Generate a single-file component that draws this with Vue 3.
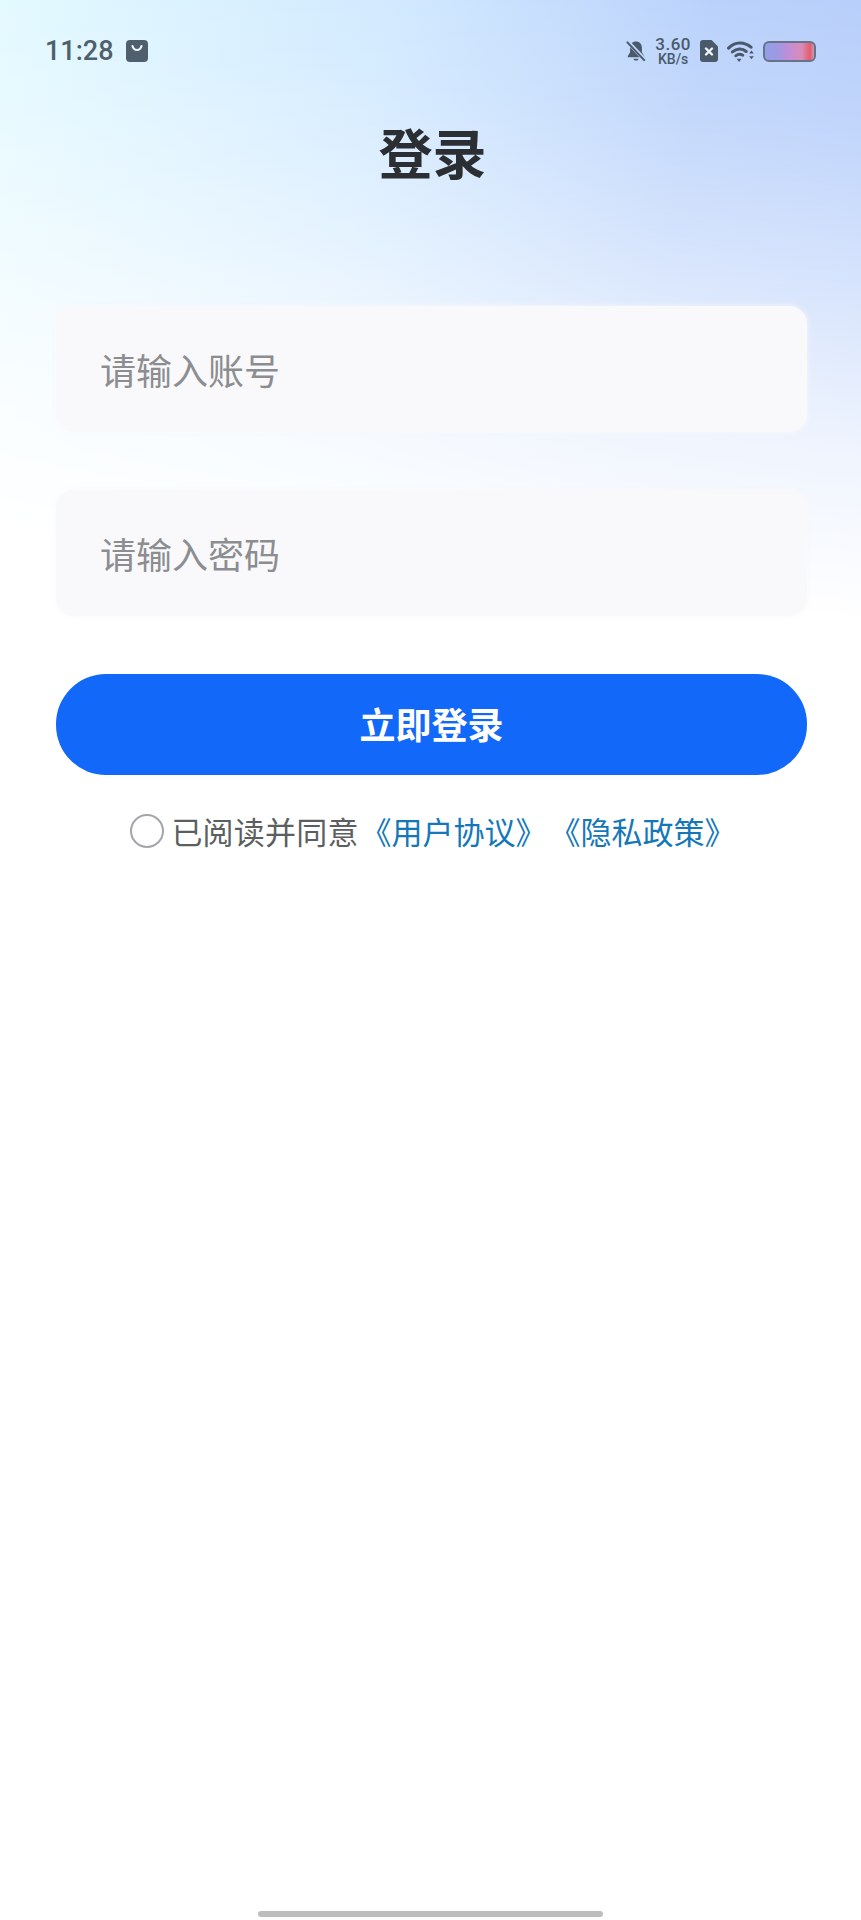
<script setup>
import { ref } from 'vue';

const account = ref('');
const password = ref('');
const agreed = ref(false);
</script>

<template>
  <div class="page">
    <div class="status-bar">
      <div class="status-left">
        <span class="time">11:28</span>
        <svg class="bag" width="22" height="22" viewBox="0 0 22 22">
          <rect width="22" height="22" rx="4" fill="#4f5f6c" />
          <path d="M6.500 6c.8 3 2.400 4 4.500 4s3.700-1 4.500-4" fill="none" stroke="#eef6ff" stroke-width="2.200" stroke-linecap="round" />
        </svg>
      </div>
      <div class="status-right">
        <svg width="20" height="22" viewBox="0 0 22 24">
          <path d="M11 1.500c-4 0-6.500 3-6.500 7v5L2 17.500v1.500h18v-1.500l-2.500-4v-5c0-4-2.500-7-6.500-7z" fill="#4a5a6b" />
          <path d="M8 20.500c.5 1.500 1.500 2 3 2s2.500-.5 3-2z" fill="#4a5a6b" />
          <path d="M2 2l19 20" stroke="#bdd3fb" stroke-width="4.500" />
          <path d="M1.500 2.500l18.500 19.500" stroke="#4a5a6b" stroke-width="2.200" stroke-linecap="round" />
        </svg>
        <div class="speed">
          <span class="speed-num">3.60</span>
          <span class="speed-unit">KB/s</span>
        </div>
        <svg width="18" height="22" viewBox="0 0 18 22">
          <path d="M3 0h8.500L18 6.500V19a3 3 0 0 1-3 3H3a3 3 0 0 1-3-3V3a3 3 0 0 1 3-3z" fill="#4a5a6b" />
          <path d="M6 8.500l6 6M12 8.500l-6 6" stroke="#f2f6ff" stroke-width="2.400" stroke-linecap="round" />
        </svg>
        <svg width="27" height="21" viewBox="0 0 28 22">
          <path d="M1.500 7.500C8 .5 18 .5 25 6.500" fill="none" stroke="#4a5a6b" stroke-width="3.200" stroke-linecap="round" />
          <path d="M5.500 11.500c4.500-4 10.500-4 14.500-.5" fill="none" stroke="#4a5a6b" stroke-width="3.200" stroke-linecap="round" />
          <path d="M9 15.500c2.500-2 5-2 7.500-.5" fill="none" stroke="#4a5a6b" stroke-width="3" stroke-linecap="round" />
          <path d="M10 18.500h5L12.500 22z" fill="#4a5a6b" />
          <path d="M23 13l2.500-3 2.500 3zM23 16l2.500 3 2.500-3z" fill="#4a5a6b" />
        </svg>
        <div class="battery"></div>
      </div>
    </div>

    <h1 class="title">登录</h1>

    <form class="login-form" @submit.prevent>
      <input v-model="account" class="field" type="text" placeholder="请输入账号" />
      <input v-model="password" class="field" type="password" placeholder="请输入密码" />
      <button class="submit" type="submit">立即登录</button>
    </form>

    <div class="agreement">
      <span class="radio" :class="{ checked: agreed }" @click="agreed = !agreed"></span>
      <span class="agree-text">已阅读并同意</span>
      <a class="agree-link first">《用户协议》</a>
      <a class="agree-link second">《隐私政策》</a>
    </div>

    <div class="home-bar"></div>
  </div>
</template>

<style>
html, body {
  margin: 0;
  background: #fff;
}
</style>

<style scoped>
.page {
  width: 861px;
  height: 1920px;
  display: flex;
  flex-direction: column;
  box-sizing: border-box;
  font-family: "Noto Sans CJK SC", "Noto Sans", sans-serif;
  background:
    linear-gradient(186deg, rgba(255, 255, 255, 0) 0, rgba(255, 255, 255, 0.15) 130px, rgba(255, 255, 255, 0.47) 295px, rgba(255, 255, 255, 0.77) 440px, #fff 620px),
    linear-gradient(100deg, #e0f9ff 0, #cfe8ff 40%, #b9d1fb 72%, #b6cdfb 100%);
  background-size: 100% 720px;
  background-repeat: no-repeat;
}

.status-bar {
  display: flex;
  justify-content: space-between;
  align-items: center;
  height: 50px;
  margin-top: 26px;
  padding: 0 45px;
}

.status-left {
  display: flex;
  align-items: center;
  gap: 12px;
}

.time {
  font-family: Roboto, sans-serif;
  font-size: 27px;
  font-weight: 500;
  color: #4f5f6c;
}

.status-right {
  display: flex;
  align-items: center;
  gap: 9px;
}

.speed {
  display: flex;
  flex-direction: column;
  align-items: center;
  font-family: Roboto, sans-serif;
  font-weight: 500;
  color: #4a5a6b;
}

.speed-num {
  font-size: 17px;
  line-height: 17px;
  letter-spacing: 0.5px;
}

.speed-unit {
  font-size: 14px;
  line-height: 13px;
}

.battery {
  width: 53px;
  height: 21px;
  box-sizing: border-box;
  border: 2.500px solid #66748a;
  border-radius: 6px;
  background: linear-gradient(90deg, #8fa0e8 0, #a595e2 30%, #c98cd0 55%, #d88cb8 75%, #e55a6c 92%, #c89cb0 100%);
}

.title {
  margin: 46px 0 0;
  padding-left: 4px;
  text-align: center;
  font-size: 54px;
  line-height: 60px;
  font-weight: 700;
  color: #2b2f33;
}

.login-form {
  display: flex;
  flex-direction: column;
  margin: 124px 54px 0 56px;
}

.field {
  height: 126px;
  box-sizing: border-box;
  border: none;
  outline: none;
  border-radius: 18px;
  margin-bottom: 58px;
  padding: 0 44px;
  background: #f9f9fb;
  box-shadow: 0 0 6px rgba(249, 249, 251, 0.9);
  font-family: inherit;
  font-size: 36px;
  color: #333;
}

.field::placeholder {
  color: #8b8d90;
}

.submit {
  height: 101px;
  border: none;
  border-radius: 50px;
  padding: 0 0 3px;
  background: #1268f8;
  color: #fff;
  font-family: inherit;
  font-size: 36px;
  font-weight: 700;
}

.agreement {
  display: flex;
  align-items: center;
  justify-content: center;
  margin-top: 35px;
  padding-left: 5px;
  font-size: 31px;
  line-height: 42px;
}

.radio {
  width: 30px;
  height: 30px;
  border: 2px solid #a3a5a8;
  border-radius: 50%;
  margin-right: 7px;
}

.agree-text {
  color: #5c5f62;
  letter-spacing: 0.2px;
}

.agree-link {
  color: #1478b8;
}

.agree-link.first {
  margin-left: 2px;
}

.agree-link.second {
  margin-left: 3px;
}

.home-bar {
  width: 345px;
  height: 6px;
  margin: auto auto 3px;
  border-radius: 3px;
  background: #bdbdbd;
}
</style>
